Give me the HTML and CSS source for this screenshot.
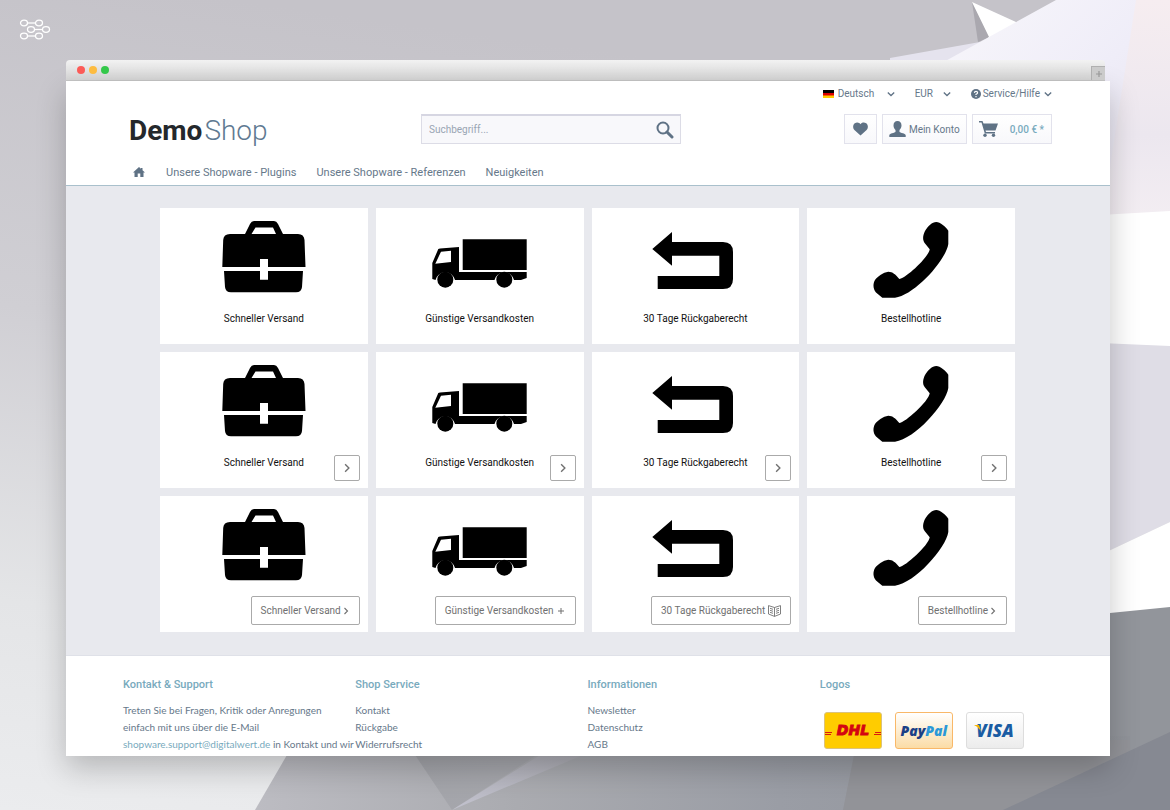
FILE: index.html
```html
<!DOCTYPE html>
<html lang="de">
<head>
<meta charset="utf-8">
<meta name="viewport" content="width=device-width, initial-scale=1">
<title>DemoShop</title>
<link rel="stylesheet" href="styles.css">
</head>
<body>
<svg class="backdrop" viewBox="0 0 1170 810" preserveAspectRatio="none" aria-hidden="true">
  <defs>
    <linearGradient id="base" x1="0.2" y1="0" x2="0" y2="1"><stop offset="0" stop-color="#c5c3c9"/><stop offset="0.4" stop-color="#d0cfd4"/><stop offset="0.75" stop-color="#e4e5e7"/><stop offset="1" stop-color="#ebecee"/></linearGradient>
    <linearGradient id="lilac" x1="0" y1="0" x2="1" y2="1"><stop offset="0" stop-color="#f8f7fb"/><stop offset="0.5" stop-color="#efedf8"/><stop offset="1" stop-color="#e4e0ea"/></linearGradient>
    <linearGradient id="rose" x1="0" y1="0" x2="0" y2="1"><stop offset="0" stop-color="#f6edf0"/><stop offset="0.5" stop-color="#ece7ef"/><stop offset="1" stop-color="#f7f1f4"/></linearGradient>
    <linearGradient id="floor" x1="0" y1="0" x2="1" y2="0"><stop offset="0" stop-color="#bcbcc2"/><stop offset="0.3" stop-color="#aaabb0"/><stop offset="0.6" stop-color="#9a9da5"/><stop offset="1" stop-color="#909399"/></linearGradient>
    <linearGradient id="glint" x1="0" y1="1" x2="1" y2="0"><stop offset="0" stop-color="#c2c2ce"/><stop offset="1" stop-color="#a9a9b0"/></linearGradient>
    <linearGradient id="fold" x1="0" y1="0" x2="1" y2="1"><stop offset="0" stop-color="#a2a3a8"/><stop offset="1" stop-color="#a6a7ad"/></linearGradient>
  </defs>
  <path fill="url(#base)" d="M0 0H1170V810H0z"/>
  <path fill="#e5e3ee" d="M890 58L980 42L1020 40V80H890z"/>
  <path fill="#aaa8af" d="M972 2L978 42L990 37z"/>
  <path fill="#fff" d="M972 2L1016 22L1030 30L980 46L989 37z"/>
  <path fill="url(#lilac)" d="M940 64L1056 0H1170V230H1100V80z"/>
  <path fill="url(#rose)" d="M1136 0H1170V212L1100 216V270L1111 160z"/>
  <path fill="#fff" d="M1100 215L1170 211V348H1100z"/>
  <path fill="#dfdde6" d="M1100 343L1170 346V522L1100 555z"/>
  <path fill="#fff" d="M1100 555L1170 522V608L1100 615z"/>
  <path fill="#92959b" d="M1100 614L1170 607V810H1100z"/>
  <path fill="url(#floor)" d="M298 736H1130V810H255z"/>
  <path fill="url(#fold)" d="M405 740H560L452 810z"/>
  <path fill="url(#glint)" d="M452 810L545 752H590z"/>
  <path fill="#929398" d="M857 740H1130V810H843z"/>
  <path fill="#868992" d="M1003 810L1170 732V810z"/>
</svg>

<header class="brandbar">
  <svg class="brandmark" width="32" height="22" viewBox="0 0 32 22" fill="none" stroke="#fff" stroke-width="1.3" role="img" aria-label="Logo">
    <ellipse cx="5" cy="4" rx="3.5" ry="2.8"/><ellipse cx="20" cy="4" rx="3.5" ry="2.8"/><path d="M8.500 4H16.500"/>
    <ellipse cx="12" cy="10.500" rx="3.500" ry="2.800"/><ellipse cx="27" cy="10.500" rx="3.500" ry="2.800"/><path d="M15.500 10.500H23.500"/>
    <ellipse cx="5" cy="17" rx="3.500" ry="2.800"/><ellipse cx="20" cy="17" rx="3.500" ry="2.800"/><path d="M8.500 17H16.500"/>
  </svg>
</header>

<svg class="symbols" aria-hidden="true">
  <symbol id="case" viewBox="52 0 104 96"><path fill-rule="evenodd" d="M85 26L90 16Q91.500 13 94 13H114Q116.500 13 118 16L123 26H138Q144 26 144.500 32L145.500 59H108V51H100V59H62.300L63.200 32Q63.500 26 70 26zM91.500 26H116L113 19.500H95.500z"/><path d="M64 63H100V71.700H108V63H143L142 79Q141.500 84.300 136 84.300H71Q65.500 84.300 65 79z"/></symbol>
  <symbol id="truck" viewBox="52 0 104 96"><path d="M86.700 31.300H150.700V62H86.700z"/><path fill-rule="evenodd" d="M56.300 55L62.300 41L64 40.500L83 39V64H150.700V70L145 72H138A10 10 0 0 0 118.500 72H79A10 10 0 0 0 59.500 72L56.300 71zM65 43.700L59.300 55.700L75 54V42.700z"/><circle cx="69.300" cy="71.700" r="8"/><circle cx="128.300" cy="71.700" r="8"/></symbol>
  <symbol id="return" viewBox="52 0 104 96"><path d="M61.300 41L81 24V34H132Q142 34 142 44V71Q142 81 132 81H66.700V68H128.300V47.700H81V57.700z"/></symbol>
  <symbol id="phone" viewBox="52 0 104 96"><path d="M129.300 14C133 14 139 19 141.300 22.700V36C139 52 108 87 88 89.700H75.300L69 84.500C66 81 65.700 76 68 72C71 68 76 64.500 81.300 63.700C86 64 88 66 92.300 71C98 71 122 49 122.700 41.300L118 35.500C115 32 116 27 118 23C121 18 125 14 129.300 14z"/></symbol>
  <symbol id="right" viewBox="0 0 8 8"><path d="M2.500 1L5.500 4L2.500 7" fill="none" stroke="currentColor" stroke-width="1.100"/></symbol>
  <symbol id="down" viewBox="0 0 8 8"><path d="M.8 2.500L4 5.500L7.200 2.500" fill="none" stroke="#5f7285" stroke-width="1.300"/></symbol>
</svg>

<div class="window">
  <div class="titlebar">
    <span class="dot dot-red"></span><span class="dot dot-yellow"></span><span class="dot dot-green"></span>
    <button class="newtab" type="button" aria-label="Neuer Tab"><svg width="8" height="8" viewBox="0 0 8 8"><path d="M4 1V7M1 4H7" stroke="#999" stroke-width="1.200"/></svg></button>
  </div>
  <div class="page">
    <div class="shophead">
      <div class="meta">
        <span class="lang"><svg width="11" height="8" viewBox="0 0 11 8"><path d="M0 0H11V3H0z"/><path fill="#d00" d="M0 3H11V6H0z"/><path fill="#fc0" d="M0 5.500H11V8H0z"/></svg>
          <select class="pick pick-lang" aria-label="Sprache"><option>Deutsch</option></select><svg class="chev"><use href="#down"/></svg></span>
        <span class="cur"><select class="pick pick-cur" aria-label="Währung"><option>EUR</option></select><svg class="chev"><use href="#down"/></svg></span>
        <button class="help" type="button"><svg width="10" height="10" viewBox="0 0 10 10"><circle cx="5" cy="5" r="5" fill="#5f7285"/><path d="M3.400 3.900Q3.500 2.400 5 2.400Q6.600 2.400 6.600 3.800Q6.600 4.700 5 5.300V6.100M5 7V8.200" fill="none" stroke="#fff" stroke-width="1.200"/></svg><span>Service/Hilfe</span><svg class="chev"><use href="#down"/></svg></button>
      </div>
      <div class="mainrow">
        <a class="logo" href="#"><b>Demo</b><span>Shop</span></a>
        <form class="search"><input type="search" placeholder="Suchbegriff..." aria-label="Suchbegriff"><button type="submit" aria-label="Suchen"><svg width="18" height="18" viewBox="0 0 18 18" fill="none" stroke="#5f7285"><circle cx="7" cy="7" r="5.500" stroke-width="2"/><path d="M11 11L16 16" stroke-width="3" stroke-linecap="round"/></svg></button></form>
        <div class="actions">
          <a class="act act-heart" href="#" aria-label="Merkzettel"><svg width="16" height="14" viewBox="0 0 16 14"><path fill="#5f7285" d="M8 14L1.500 8C-.7 5.500 0 2 2 .8C4.200-.6 7 .2 8 2C9-.0 11.800-.6 14 .8C16 2 16.700 5.500 14.500 8z"/></svg></a>
          <a class="act act-user" href="#"><svg width="17" height="16" viewBox="0 0 17 16"><path fill="#5f7285" d="M8.500 0C11 0 12.500 1.500 12.500 4.500C12.500 6.500 11.700 7.500 10.500 9V11C12 12 16 12.300 16.700 14V16H.3V14C1 12.300 5 12 6.500 11V9C5.300 7.500 4.500 6.500 4.500 4.500C4.500 1.500 6 0 8.500 0z"/></svg><span>Mein Konto</span></a>
          <a class="act act-cart" href="#"><svg width="19" height="16" viewBox="0 0 19 16"><path fill="#5f7285" d="M0 0H3.500L4.500 2.500H19L16.500 9.500H6.500L7 11H16V12.500H5.800L2.500 1.500H0z"/><circle cx="6" cy="14.300" r="1.700" fill="#5f7285"/><circle cx="14.500" cy="14.300" r="1.700" fill="#5f7285"/></svg><span>0,00 € *</span></a>
        </div>
      </div>
      <nav class="nav">
        <a class="home" href="#" aria-label="Home"><svg width="12" height="10" viewBox="0 0 12 10"><path fill="#5f7285" d="M6 0L8 1.800V1H9.500V3.200L12 5.500H10.500V10H7.300V6.500H4.700V10H1.500V5.500H0z"/></svg></a>
        <a href="#">Unsere Shopware - Plugins</a><a href="#">Unsere Shopware - Referenzen</a><a href="#">Neuigkeiten</a>
      </nav>
    </div>

    <main class="cards">
      <article class="card"><div class="face"><svg class="pic"><use href="#case"/></svg><p>Schneller Versand</p></div></article>
      <article class="card"><div class="face"><svg class="pic"><use href="#truck"/></svg><p>Günstige Versandkosten</p></div></article>
      <article class="card"><div class="face"><svg class="pic"><use href="#return"/></svg><p>30 Tage Rückgaberecht</p></div></article>
      <article class="card"><div class="face"><svg class="pic"><use href="#phone"/></svg><p>Bestellhotline</p></div></article>

      <article class="card"><div class="face"><svg class="pic"><use href="#case"/></svg><p>Schneller Versand</p></div><button class="more" type="button" aria-label="Mehr"><svg class="arrow"><use href="#right"/></svg></button></article>
      <article class="card"><div class="face"><svg class="pic"><use href="#truck"/></svg><p>Günstige Versandkosten</p></div><button class="more" type="button" aria-label="Mehr"><svg class="arrow"><use href="#right"/></svg></button></article>
      <article class="card"><div class="face"><svg class="pic"><use href="#return"/></svg><p>30 Tage Rückgaberecht</p></div><button class="more" type="button" aria-label="Mehr"><svg class="arrow"><use href="#right"/></svg></button></article>
      <article class="card"><div class="face"><svg class="pic"><use href="#phone"/></svg><p>Bestellhotline</p></div><button class="more" type="button" aria-label="Mehr"><svg class="arrow"><use href="#right"/></svg></button></article>

      <article class="card"><div class="face"><svg class="pic"><use href="#case"/></svg></div><button class="cta" type="button">Schneller Versand<svg class="arrow"><use href="#right"/></svg></button></article>
      <article class="card"><div class="face"><svg class="pic"><use href="#truck"/></svg></div><button class="cta cta-wide" type="button">Günstige Versandkosten<svg width="8" height="8" viewBox="0 0 8 8"><path d="M4 1V7M1 4H7" stroke="currentColor"/></svg></button></article>
      <article class="card"><div class="face"><svg class="pic"><use href="#return"/></svg></div><button class="cta cta-book" type="button">30 Tage Rückgaberecht<svg width="13" height="12" viewBox="0 0 13 12" fill="none" stroke="currentColor"><path d="M6.500 2.500L.5 .6V9L6.500 11.400L12.500 9V.6zV11.400M2 3.300L5 4.300M2 5.300L5 6.300M2 7.300L5 8.300M11 3.300L8 4.300M11 5.300L8 6.300M11 7.300L8 8.300" stroke-width=".9"/></svg></button></article>
      <article class="card"><div class="face"><svg class="pic"><use href="#phone"/></svg></div><button class="cta" type="button">Bestellhotline<svg class="arrow"><use href="#right"/></svg></button></article>
    </main>

    <footer class="foot">
      <section><h2>Kontakt &amp; Support</h2><p>Treten Sie bei Fragen, Kritik oder Anregungen<br>einfach mit uns über die E-Mail<br><a href="#">shopware.support@digitalwert.de</a> in Kontakt und wir</p></section>
      <section><h2>Shop Service</h2><ul><li><a href="#">Kontakt</a></li><li><a href="#">Rückgabe</a></li><li><a href="#">Widerrufsrecht</a></li></ul></section>
      <section><h2>Informationen</h2><ul><li><a href="#">Newsletter</a></li><li><a href="#">Datenschutz</a></li><li><a href="#">AGB</a></li></ul></section>
      <section><h2>Logos</h2>
        <div class="pays">
          <span class="pay dhl"><svg width="56" height="35" viewBox="0 0 56 35"><path stroke="#d40511" stroke-width=".9" d="M0 19.500H7M0 21.500H6M50 19.500H56M49 21.500H56"/><text x="28" y="22" text-anchor="middle">DHL</text></svg></span>
          <span class="pay paypal"><i>Pay</i><em>Pal</em></span>
          <span class="pay visa"><svg width="56" height="35" viewBox="0 0 56 35"><text x="28" y="24" text-anchor="middle">VISA</text><path fill="#f7b600" d="M7 12H12L14 18Q11 13.500 7 12z"/></svg></span>
        </div>
      </section>
    </footer>
  </div>
</div>
</body>
</html>
```

FILE: styles.css
```css
* { box-sizing: border-box; }
body {
  margin: 0;
  position: relative;
  min-height: 100vh;
  font-family: Roboto, "Liberation Sans", sans-serif;
  font-size: 10px;
  color: #66788a;
  background: #d0cfd4;
}
a { color: inherit; text-decoration: none; }
button, input, select { font: inherit; color: inherit; margin: 0; padding: 0; border: 0; background: none; }
button svg { display: block; }
.backdrop { position: absolute; inset: 0; width: 100%; height: 100%; z-index: -1; }
.symbols { display: none; }
.brandbar { height: 60px; padding: 19px 0 0 19px; }
.brandmark { display: block; }

.window { margin: 0 60px 54px 66px; }
.titlebar {
  display: flex;
  align-items: center;
  gap: 4px;
  height: 21px;
  margin-right: 5px;
  padding-left: 11px;
  border-radius: 4px 4px 0 0;
  border-bottom: 1px solid #c6c6c6;
  background: linear-gradient(#f2f2f2, #d6d6d6);
}
.dot { width: 8px; height: 8px; border-radius: 50%; }
.dot-red { background: #fc5b57; }
.dot-yellow { background: #fdbc40; }
.dot-green { background: #34c84a; }
.newtab {
  display: grid;
  place-items: center;
  align-self: flex-end;
  width: 14px;
  height: 14px;
  margin-left: auto;
  border: 1px solid #b0b0b0;
  border-width: 1px 0 0 1px;
  background: #cbcbcb;
}
.page { background: #fff; box-shadow: 0 12px 28px rgba(0, 0, 0, .22); }

.shophead { padding: 0 58px 0 57px; border-bottom: 1px solid #a9c0cc; }
.meta { display: flex; justify-content: flex-end; height: 25px; }
.lang, .cur, .help { display: flex; align-items: center; }
.lang, .cur { margin-right: 20px; }
.lang { gap: 4px; }
.help { gap: 2px; }
.pick { appearance: none; }
.pick-lang { width: 45px; }
.pick-cur { width: 28px; }
.chev { width: 8px; height: 8px; }
.help .chev { margin-left: 2px; }

.mainrow { display: grid; grid-template-columns: 298px minmax(200px, 260px) 1fr; align-items: start; padding-top: 8px; height: 47px; }
.logo { padding-left: 6px; font-size: 28px; line-height: 34px; }
.logo b { color: #24282c; }
.logo span { margin-left: 2px; font-weight: 300; color: #5f7a92; }
.search { display: flex; align-items: center; height: 30px; border: 1px solid #dcdce6; border-top: 2px solid #d6d6e2; background: #f8f8fb; }
.search input { flex: 1; min-width: 0; padding-left: 7px; outline: 0; }
.search input::placeholder { color: #98a5b3; opacity: 1; }
.search button { padding-right: 6px; }
.actions { display: flex; justify-content: flex-end; gap: 5px; }
.act { display: flex; align-items: center; height: 30px; border: 1px solid #e2e2ec; background: linear-gradient(#fff, #f8f8fb); }
.act-heart { padding: 0 8px; width: 33px; }
.act-user { gap: 3px; padding: 0 6px; }
.act-cart { gap: 12px; padding: 0 7px 0 6px; color: #78aabd; font-weight: 500; }

.nav { display: flex; align-items: center; gap: 20px; height: 32px; padding: 6px 0 0 10px; font-size: 11px; }
.home { width: 13px; }
.home svg { display: block; }

.cards { display: grid; grid-template-columns: repeat(4, 1fr); gap: 8px; padding: 22px 95px 23px 94px; background: #e8e9ee; color: #111; }
.card { display: grid; min-height: 136px; background: #fff; }
.face, .more, .cta { grid-area: 1 / 1; }
.face { display: flex; flex-direction: column; align-items: center; }
.face p { margin: 8px 0 0; line-height: 14px; }
.pic { width: 104px; height: 96px; }
.more, .cta { display: flex; align-items: center; justify-content: center; place-self: end; margin: 0 8px 7px 0; border: 1px solid #aaa; border-radius: 2px; background: #fff; color: #707070; }
.more { width: 26px; height: 26px; }
.cta { gap: 1px; height: 29px; padding: 0 9px; }
.cta-wide { padding: 0 10px 0 9px; gap: 3px; }
.cta-book { gap: 3px; }
.arrow { width: 8px; height: 8px; }
.more .arrow { width: 10px; height: 10px; }

.foot { display: grid; grid-template-columns: repeat(4, 1fr); padding: 22px 58px 3px 57px; border-top: 1px solid #dfe1e8; }
.foot h2 { margin: 0; font-size: 11px; line-height: 14px; font-weight: 500; color: #78aabd; }
.foot p { margin: 10px 0 0; line-height: 17px; white-space: nowrap; }
.foot p, .foot ul { font-family: Lato, sans-serif; }
.foot p a { color: #78aabd; }
.foot ul { margin: 10px 0 0; padding: 0; list-style: none; line-height: 17px; }
.pays { display: flex; gap: 13px; padding: 20px 0 0 4px; }
.pay { display: flex; align-items: center; justify-content: center; width: 58px; height: 37px; border: 1px solid #ddd; border-radius: 3px; font-size: 14px; }
.dhl { background: #fc0; border-color: #dcc37a; }
.dhl text { font: italic 700 14px "DejaVu Sans", sans-serif; fill: #d40511; stroke: #d40511; stroke-width: 1px; }
.paypal { background: linear-gradient(#fff, #fbdca6); border-color: #f9b868; font-family: "Open Sans", sans-serif; font-weight: 800; font-style: italic; }
.paypal i { color: #1a3f86; }
.paypal em { color: #2b98d8; }
.visa { background: linear-gradient(#fff, #ececec); }
.visa text { font: italic 800 17px "Open Sans", sans-serif; fill: #1a5ca3; }
```
